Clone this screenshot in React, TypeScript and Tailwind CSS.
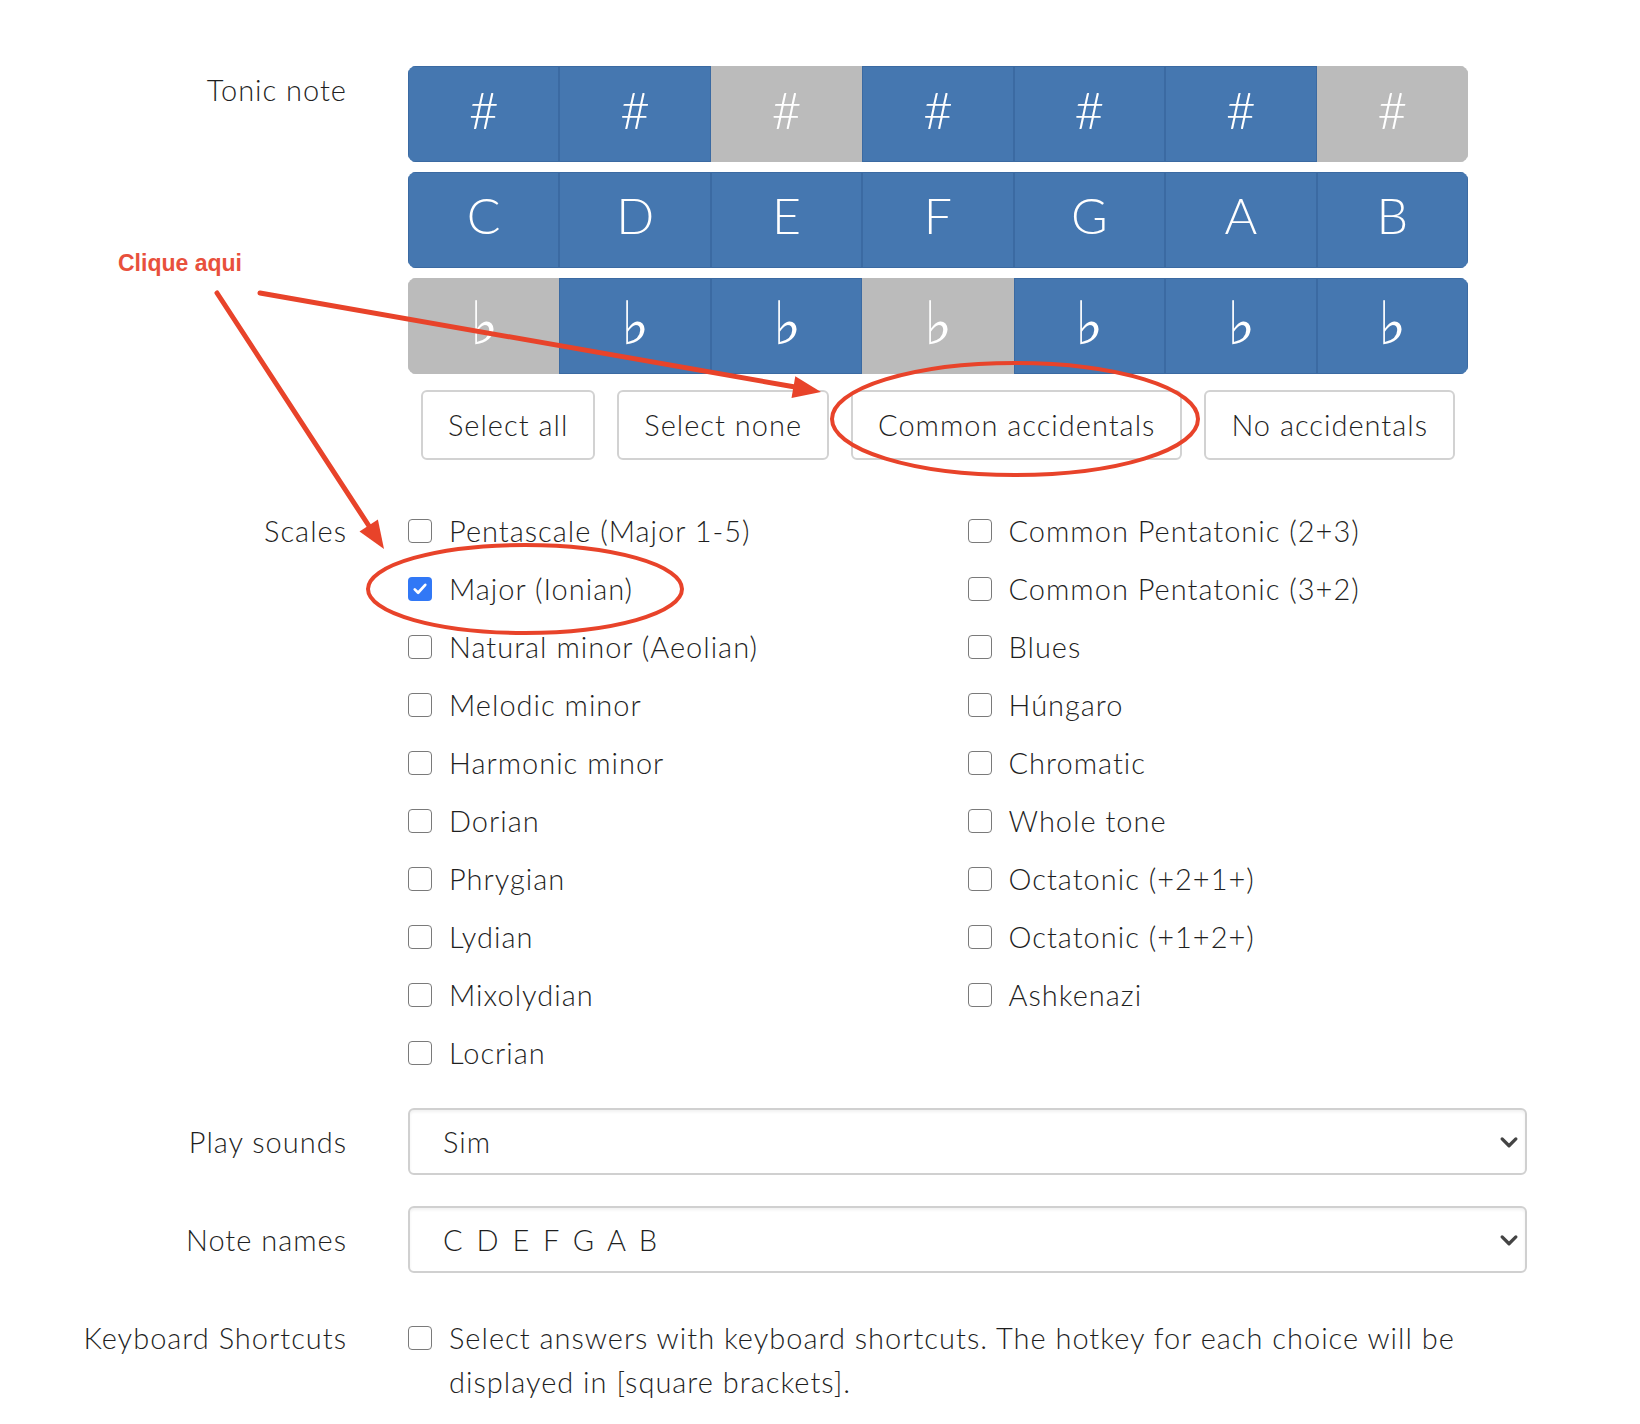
import { useState } from 'react';

const LETTERS = ['C', 'D', 'E', 'F', 'G', 'A', 'B'];

// which accidentals are switched off (shown grey)
const SHARP_OFF = [2, 6];
const FLAT_OFF = [0, 3];

const LEFT_SCALES = [
  'Pentascale (Major 1-5)',
  'Major (Ionian)',
  'Natural minor (Aeolian)',
  'Melodic minor',
  'Harmonic minor',
  'Dorian',
  'Phrygian',
  'Lydian',
  'Mixolydian',
  'Locrian',
];

const RIGHT_SCALES = [
  'Common Pentatonic (2+3)',
  'Common Pentatonic (3+2)',
  'Blues',
  'Húngaro',
  'Chromatic',
  'Whole tone',
  'Octatonic (+2+1+)',
  'Octatonic (+1+2+)',
  'Ashkenazi',
];

function NoteRow({ labels, off, size }: { labels: string[]; off: number[]; size: string }) {
  return (
    <div className="flex h-[96px] w-[1060px] rounded-lg overflow-hidden">
      {labels.map((l, i) => {
        const isOff = off.includes(i);
        return (
          <div
            key={i}
            className={
              isOff
                ? 'flex-1 flex items-center justify-center pb-[10px] bg-[#bbbbbb] border border-[#bbbbbb] text-white font-light'
                : 'flex-1 flex items-center justify-center pb-[10px] bg-[#4577b0] border border-[#3b6aa2] text-white font-light'
            }
          >
            <span className={size}>{l}</span>
          </div>
        );
      })}
    </div>
  );
}

function Box({ checked }: { checked: boolean }) {
  if (checked) {
    return (
      <span className="w-6 h-6 shrink-0 rounded-[4px] bg-[#3178f6] flex items-center justify-center">
        <svg viewBox="0 0 24 24" className="w-[18px] h-[18px]" fill="none" stroke="white" strokeWidth="3.6" strokeLinecap="round" strokeLinejoin="round">
          <path d="M5 12.5l4.5 4.5L19 6.5" />
        </svg>
      </span>
    );
  }
  return <span className="block w-6 h-6 shrink-0 rounded-[4px] border-[1.5px] border-[#7a7a7a] bg-white" />;
}

function ScaleItem({ name, checked, onToggle }: { name: string; checked: boolean; onToggle: () => void }) {
  return (
    <label className="flex items-center gap-[17px] h-[58px] cursor-pointer" onClick={onToggle}>
      <Box checked={checked} />
      <span>{name}</span>
    </label>
  );
}

function Chevron() {
  return (
    <svg viewBox="0 0 16 16" className="absolute right-[8px] top-1/2 -translate-y-1/2 w-[20px] h-[20px] pointer-events-none" fill="none" stroke="#444" strokeWidth="2.6" strokeLinecap="round" strokeLinejoin="round">
      <path d="M2.5 5.5L8 11l5.5-5.5" />
    </svg>
  );
}

export default function App() {
  const [selected, setSelected] = useState<string[]>(['Major (Ionian)']);
  const [shortcuts, setShortcuts] = useState(false);

  const toggle = (name: string) =>
    setSelected(s => (s.includes(name) ? s.filter(x => x !== name) : [...s, name]));

  return (
    <div className="relative w-[1640px] h-[1424px] bg-white text-[#1f1f1f] text-[29px] font-light tracking-[1px]" style={{ fontFamily: 'Lato, "Open Sans", sans-serif' }}>
      <div className="pt-[66px] grid grid-cols-[347px_1119px] gap-x-[61px]">
        {/* Tonic note */}
        <div className="text-right leading-[48px]">Tonic note</div>
        <div>
          <div className="flex flex-col gap-[10px] tracking-normal">
            <NoteRow labels={LETTERS.map(() => '#')} off={SHARP_OFF} size="text-[52px]" />
            <NoteRow labels={LETTERS} off={[]} size="text-[50px]" />
            <NoteRow labels={LETTERS.map(() => '♭')} off={FLAT_OFF} size="text-[60px]" />
          </div>
          <div className="w-[1060px] mt-[16px] flex justify-center gap-[22px]">
            {['Select all', 'Select none', 'Common accidentals', 'No accidentals'].map(b => (
              <button key={b} className="h-[70px] px-[25px] border-2 border-[#d2d2d2] rounded-md bg-white">
                {b}
              </button>
            ))}
          </div>
        </div>

        {/* Scales */}
        <div className="mt-[42px] text-right leading-[58px]">Scales</div>
        <div className="mt-[42px] grid grid-cols-2">
          <div className="flex flex-col">
            {LEFT_SCALES.map(s => (
              <ScaleItem key={s} name={s} checked={selected.includes(s)} onToggle={() => toggle(s)} />
            ))}
          </div>
          <div className="flex flex-col">
            {RIGHT_SCALES.map(s => (
              <ScaleItem key={s} name={s} checked={selected.includes(s)} onToggle={() => toggle(s)} />
            ))}
          </div>
        </div>

        {/* Play sounds */}
        <div className="mt-[26px] h-[67px] flex items-center justify-end">Play sounds</div>
        <div className="mt-[26px] relative">
          <select className="appearance-none w-full h-[67px] pl-[33px] border-2 border-[#d0d0d0] rounded-md bg-white shadow-[inset_0_2px_3px_rgba(0,0,0,0.06)] outline-none">
            <option>Sim</option>
            <option>Não</option>
          </select>
          <Chevron />
        </div>

        {/* Note names */}
        <div className="mt-[31px] h-[67px] flex items-center justify-end">Note names</div>
        <div className="mt-[31px] relative">
          <select className="appearance-none w-full h-[67px] pl-[33px] border-2 border-[#d0d0d0] rounded-md bg-white shadow-[inset_0_2px_3px_rgba(0,0,0,0.06)] outline-none tracking-[3px]">
            <option>C D E F G A B</option>
            <option>Dó Ré Mi Fá Sol Lá Si</option>
          </select>
          <Chevron />
        </div>

        {/* Keyboard shortcuts */}
        <div className="mt-[43px] text-right leading-[44px]">Keyboard Shortcuts</div>
        <label className="mt-[43px] flex items-start gap-[17px] leading-[44px] cursor-pointer" onClick={() => setShortcuts(v => !v)}>
          <span className="mt-[10px] flex shrink-0">
            <Box checked={shortcuts} />
          </span>
          <span>
            Select answers with keyboard shortcuts. The hotkey for each choice will be displayed in [square brackets].
          </span>
        </label>
      </div>

      {/* red annotations drawn over the form */}
      <svg className="absolute top-0 left-0 pointer-events-none" width="1640" height="1424" viewBox="0 0 1640 1424">
        <text x="118" y="271" fill="#e8503c" fontSize="23" fontWeight="700" letterSpacing="0" fontFamily="'Liberation Sans', Arial, sans-serif">
          Clique aqui
        </text>
        <g stroke="#e8432a" strokeWidth="5" fill="none" strokeLinecap="round">
          <line x1="260" y1="293" x2="795" y2="387" />
          <line x1="217" y1="293" x2="369" y2="526" />
          <ellipse cx="1015" cy="419" rx="183" ry="56" strokeWidth="4" />
          <ellipse cx="525" cy="589" rx="157" ry="44" strokeWidth="4" />
        </g>
        <polygon points="821,392 791.5,397.9 795.3,376.3" fill="#e8432a" />
        <polygon points="384,549 359.5,531.5 377.9,519.5" fill="#e8432a" />
      </svg>
    </div>
  );
}
